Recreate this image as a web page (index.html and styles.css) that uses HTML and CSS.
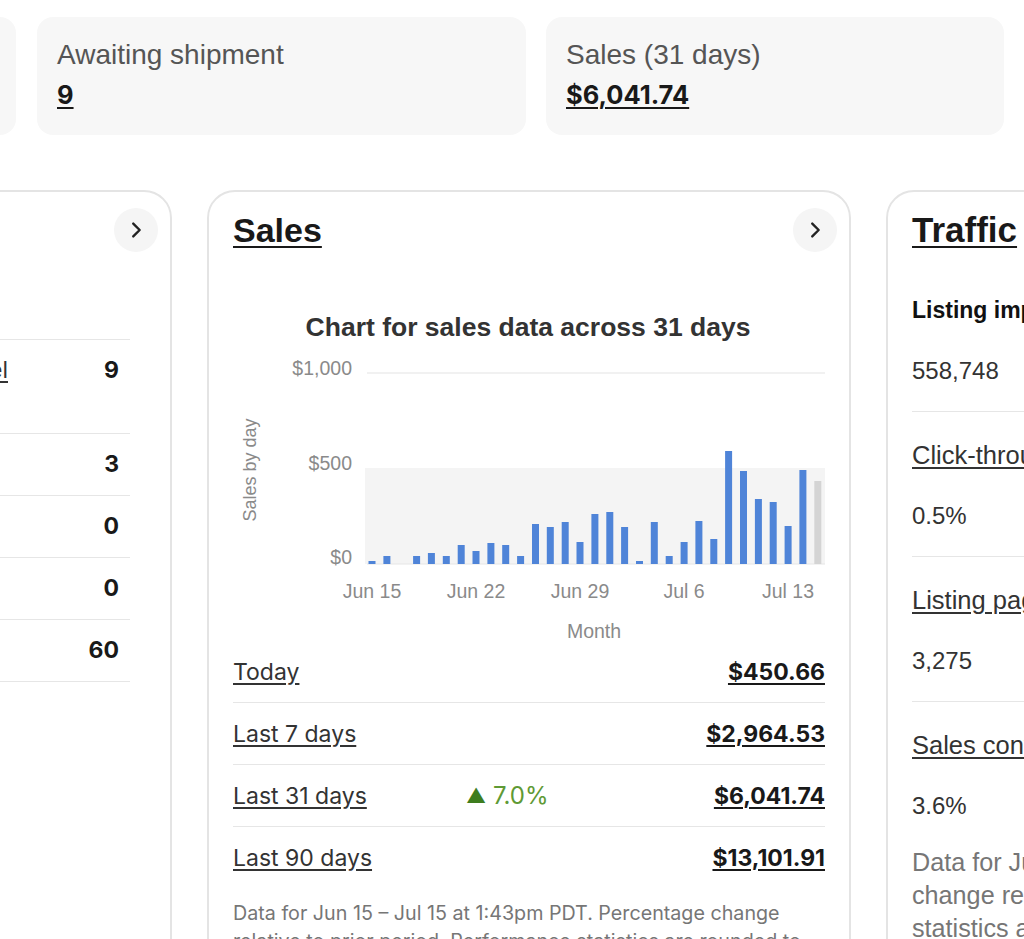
FILE: index.html
```html
<!DOCTYPE html>
<html lang="en">
<head>
    <meta charset="UTF-8">
    <title>Seller Hub - Overview</title>
    <link rel="stylesheet" href="styles.css">
</head>
<body>
    <div class="page">
        <!-- summary tiles -->
        <div class="tiles">
            <div class="tile">
                <div class="tile-label">Orders to ship</div>
                <a class="tile-value" href="#">9</a>
            </div>
            <div class="tile">
                <div class="tile-label">Awaiting shipment</div>
                <a class="tile-value" href="#">9</a>
            </div>
            <div class="tile">
                <div class="tile-label">Sales (31 days)</div>
                <a class="tile-value" href="#">$6,041.74</a>
            </div>
        </div>

        <div class="cards">
            <!-- orders card (mostly off screen) -->
            <div class="card">
                <div class="card-head">
                    <a class="card-title" href="#">Orders</a>
                    <button class="chevron" aria-label="Open orders">
                        <svg viewBox="0 0 24 24" width="22" height="22"><path d="M9 5l7 7-7 7" fill="none" stroke="#222" stroke-width="2.6" stroke-linecap="round" stroke-linejoin="round"/></svg>
                    </button>
                </div>
                <ul class="task-list">
                    <li class="task task-tall">
                        <div class="task-text">
                            <a class="task-label" href="#">Awaiting shipment - print shipping label</a>
                            <div class="task-sub">Ship by today</div>
                        </div>
                        <span>9</span>
                    </li>
                    <li class="task"><a class="task-label" href="#">Awaiting shipment - overdue</a><span>3</span></li>
                    <li class="task"><a class="task-label" href="#">Return requests</a><span>0</span></li>
                    <li class="task"><a class="task-label" href="#">Cancellation requests</a><span>0</span></li>
                    <li class="task"><a class="task-label" href="#">Awaiting payment</a><span>60</span></li>
                </ul>
            </div>

            <!-- sales card -->
            <div class="card">
                <div class="card-head">
                    <a class="card-title" href="#">Sales</a>
                    <button class="chevron" aria-label="Open sales">
                        <svg viewBox="0 0 24 24" width="22" height="22"><path d="M9 5l7 7-7 7" fill="none" stroke="#222" stroke-width="2.6" stroke-linecap="round" stroke-linejoin="round"/></svg>
                    </button>
                </div>
                <svg class="chart" viewBox="0 0 592 341" width="592" height="341">
                    <text class="chart-title" x="295" y="36" text-anchor="middle">Chart for sales data across 31 days</text>
                    <rect x="132" y="168" width="460" height="96" fill="#f4f4f4"/>
                    <line x1="134" y1="73" x2="592" y2="73" stroke="#ececec" stroke-width="1.5"/>
                    <line x1="134" y1="264" x2="592" y2="264" stroke="#e6e6e6" stroke-width="1"/>
                    <text class="axis" x="119" y="75" text-anchor="end">$1,000</text>
                    <text class="axis" x="119" y="170" text-anchor="end">$500</text>
                    <text class="axis" x="119" y="264" text-anchor="end">$0</text>
                    <text class="axis-title" transform="translate(23 170) rotate(-90)" text-anchor="middle">Sales by day</text>
                    <g fill="#4f84d8">
                        <rect x="135.5" y="261" width="7" height="3"/>
                        <rect x="150.4" y="256" width="7" height="8"/>
                        <rect x="180.1" y="256" width="7" height="8"/>
                        <rect x="194.9" y="253" width="7" height="11"/>
                        <rect x="209.8" y="256" width="7" height="8"/>
                        <rect x="224.7" y="245" width="7" height="19"/>
                        <rect x="239.5" y="251" width="7" height="13"/>
                        <rect x="254.4" y="243" width="7" height="21"/>
                        <rect x="269.2" y="245" width="7" height="19"/>
                        <rect x="284.1" y="256" width="7" height="8"/>
                        <rect x="299.0" y="224" width="7" height="40"/>
                        <rect x="313.8" y="227" width="7" height="37"/>
                        <rect x="328.7" y="222" width="7" height="42"/>
                        <rect x="343.5" y="242" width="7" height="22"/>
                        <rect x="358.4" y="214" width="7" height="50"/>
                        <rect x="373.3" y="212" width="7" height="52"/>
                        <rect x="388.1" y="227" width="7" height="37"/>
                        <rect x="403.0" y="261" width="7" height="3"/>
                        <rect x="417.8" y="222" width="7" height="42"/>
                        <rect x="432.7" y="256" width="7" height="8"/>
                        <rect x="447.6" y="242" width="7" height="22"/>
                        <rect x="462.4" y="221" width="7" height="43"/>
                        <rect x="477.3" y="239" width="7" height="25"/>
                        <rect x="492.1" y="151" width="7" height="113"/>
                        <rect x="507.0" y="171" width="7" height="93"/>
                        <rect x="521.9" y="199" width="7" height="65"/>
                        <rect x="536.7" y="202" width="7" height="62"/>
                        <rect x="551.6" y="226" width="7" height="38"/>
                        <rect x="566.4" y="170" width="7" height="94"/>
                    </g>
                    <rect x="581.3" y="181" width="7" height="83" fill="#d4d4d4"/>
                    <text class="axis" x="139" y="298" text-anchor="middle">Jun 15</text>
                    <text class="axis" x="243" y="298" text-anchor="middle">Jun 22</text>
                    <text class="axis" x="347" y="298" text-anchor="middle">Jun 29</text>
                    <text class="axis" x="451" y="298" text-anchor="middle">Jul 6</text>
                    <text class="axis" x="555" y="298" text-anchor="middle">Jul 13</text>
                    <text class="axis" x="361" y="338" text-anchor="middle">Month</text>
                </svg>
                <div class="sales-row">
                    <a class="row-label" href="#">Today</a>
                    <span></span>
                    <a class="row-value" href="#">$450.66</a>
                </div>
                <div class="sales-row">
                    <a class="row-label" href="#">Last 7 days</a>
                    <span></span>
                    <a class="row-value" href="#">$2,964.53</a>
                </div>
                <div class="sales-row">
                    <a class="row-label" href="#">Last 31 days</a>
                    <span class="change"><span class="arrow">&#9650;</span> 7.0%</span>
                    <a class="row-value" href="#">$6,041.74</a>
                </div>
                <div class="sales-row">
                    <a class="row-label" href="#">Last 90 days</a>
                    <span></span>
                    <a class="row-value" href="#">$13,101.91</a>
                </div>
                <p class="note">Data for Jun 15 &ndash; Jul 15 at 1:43pm PDT. Percentage change relative to prior period. Performance statistics are rounded to the nearest decimal.</p>
            </div>

            <!-- traffic card -->
            <div class="card traffic">
                <div class="card-head">
                    <a class="card-title" href="#">Traffic</a>
                    <button class="chevron" aria-label="Open traffic">
                        <svg viewBox="0 0 24 24" width="22" height="22"><path d="M9 5l7 7-7 7" fill="none" stroke="#222" stroke-width="2.6" stroke-linecap="round" stroke-linejoin="round"/></svg>
                    </button>
                </div>
                <div class="metric">
                    <div class="metric-label strong">Listing impressions</div>
                    <div class="metric-value">558,748</div>
                </div>
                <div class="metric">
                    <a class="metric-label" href="#">Click-through rate</a>
                    <div class="metric-value">0.5%</div>
                </div>
                <div class="metric">
                    <a class="metric-label" href="#">Listing page views</a>
                    <div class="metric-value">3,275</div>
                </div>
                <div class="metric last">
                    <a class="metric-label" href="#">Sales conversion rate</a>
                    <div class="metric-value">3.6%</div>
                </div>
                <p class="note">Data for Jun 15 &ndash; Jul 15 at 1:43pm PDT. Percentage change relative to prior period. Performance statistics are rounded to the nearest decimal.</p>
            </div>
        </div>
    </div>
</body>
</html>
```

FILE: styles.css
```css
body {
    margin: 0;
    background-color: #fff;
    color: #191919;
    font-family: "Inter", "Liberation Sans", Arial, sans-serif;
    overflow: hidden;
    height: 939px;
}
a {
    color: inherit;
}
.page {
    width: 1024px;
}

/* summary tiles */
.tiles {
    display: grid;
    grid-template-columns: 400px 489px 457px;
    column-gap: 21px;
    margin-left: -384px;
    padding-top: 17px;
}
.tiles .tile + .tile + .tile {
    margin-left: -1px;
}
.tile {
    height: 118px;
    box-sizing: border-box;
    padding: 21px 20px 0;
    background-color: #f7f7f7;
    border-radius: 16px;
}
.tile-label {
    font-family: "Liberation Sans", Arial, sans-serif;
    font-size: 28px;
    line-height: 34px;
    color: #555;
}
.tile-value {
    display: inline-block;
    margin-top: 6px;
    font-size: 25.5px;
    line-height: 34px;
    font-weight: 700;
    text-decoration-thickness: 2px;
    text-underline-offset: 3px;
}

/* cards */
.cards {
    display: grid;
    grid-template-columns: 644px 644px 644px;
    column-gap: 35px;
    margin-left: -472px;
    margin-top: 55px;
}
.card {
    border: 2px solid #e4e4e4;
    border-radius: 28px;
    padding: 16px 24px 0;
    min-height: 800px;
}
.card-head {
    display: flex;
    justify-content: space-between;
    align-items: center;
    height: 44px;
}
.card-title {
    font-family: "Liberation Sans", Arial, sans-serif;
    font-size: 34px;
    font-weight: 700;
    text-decoration-thickness: 2px;
    text-underline-offset: 4px;
}
.chevron {
    width: 44px;
    height: 44px;
    margin-right: -12px;
    border: 0;
    border-radius: 50%;
    background-color: #f5f5f5;
    display: flex;
    align-items: center;
    justify-content: center;
    padding: 0;
}

/* orders list */
.task-list {
    list-style: none;
    margin: 87px 16px 0 0;
    padding: 0;
    border-top: 1px solid #e6e6e6;
}
.task {
    display: flex;
    justify-content: space-between;
    align-items: flex-start;
    padding: 15px 11px 15px 0;
    border-bottom: 1px solid #e6e6e6;
    font-size: 23px;
    line-height: 31px;
}
.task-tall {
    padding-bottom: 16px;
}
.task-label {
    color: #333;
    text-underline-offset: 3px;
}
.task-text {
    width: 454px;
}
.task-text .task-label {
    display: block;
    text-align: right;
}
.task-sub {
    color: #555;
}
.task span {
    font-weight: 700;
}

/* chart */
.chart {
    display: block;
    margin-top: 48px;
}
.chart-title {
    font-family: "Liberation Sans", Arial, sans-serif;
    font-size: 26.5px;
    font-weight: 700;
    fill: #333;
}
.axis {
    font-family: "Liberation Sans", Arial, sans-serif;
    font-size: 19.5px;
    fill: #8a8a8a;
}
.axis-title {
    font-family: "Liberation Sans", Arial, sans-serif;
    font-size: 18px;
    fill: #8a8a8a;
}

/* sales summary rows */
.sales-row {
    display: grid;
    grid-template-columns: 233px 1fr auto;
    align-items: center;
    height: 61px;
    border-bottom: 1px solid #e6e6e6;
    font-size: 23px;
}
.sales-row:last-of-type {
    border-bottom: 0;
}
.row-label {
    color: #333;
    text-underline-offset: 3px;
}
.row-value {
    font-weight: 700;
    text-decoration-thickness: 2px;
    text-underline-offset: 3px;
}
.change {
    color: #5f9a35;
    font-size: 24px;
}
.arrow {
    font-size: 20px;
    color: #3e7d1e;
    vertical-align: 1px;
}
.note {
    margin: 11px 0 0;
    font-size: 19.7px;
    line-height: 28px;
    color: #767676;
}

/* traffic card */
.traffic {
    font-family: "Liberation Sans", Arial, sans-serif;
}
.traffic .card-title {
    font-size: 35px;
}
.metric {
    margin-top: 0;
    padding: 27px 0 22px;
    border-bottom: 1px solid #e6e6e6;
}
.card-head + .metric {
    margin-top: 15px;
}
.metric.last {
    border-bottom: 0;
}
.metric-label {
    display: block;
    font-size: 25.5px;
    line-height: 32px;
    color: #333;
    width: max-content;
    text-underline-offset: 3px;
}
.metric-label.strong {
    font-size: 23px;
    font-weight: 700;
    color: #111;
}
.metric-value {
    margin-top: 27px;
    font-size: 24px;
    line-height: 36px;
    color: #333;
}
.traffic .note {
    margin-top: 0;
    font-size: 25.2px;
    line-height: 33px;
}
```
